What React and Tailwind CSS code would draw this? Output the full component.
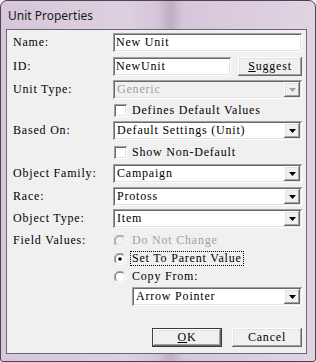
import React from "react";

const MONO = "font-[family-name:'Liberation_Serif',serif] text-[12px] tracking-[0.8px] leading-[13px]";
const SUNKEN = "shadow-[inset_1px_1px_0_#a0a0a0,inset_-1px_-1px_0_#ffffff,inset_2px_2px_0_#696969,inset_-2px_-2px_0_#e3e3e3]";
const RAISED = "shadow-[inset_-1px_-1px_0_#696969,inset_1px_1px_0_#ffffff,inset_-2px_-2px_0_#a0a0a0,inset_2px_2px_0_#e3e3e3]";

function Arrow({ disabled }) {
  return (
    <div className={`w-[16px] h-full shrink-0 bg-[#f0f0f0] flex items-center justify-center ${RAISED}`}>
      <svg width="7" height="4" viewBox="0 0 7 4">
        <path d="M0 0H7L3.5 4Z" fill={disabled ? "#a0a0a0" : "#000"} />
      </svg>
    </div>
  );
}

function Combo({ text, disabled, w = "w-[189px]" }) {
  return (
    <div className={`${w} shrink-0 h-[19px] p-[2px] flex ${SUNKEN} ${disabled ? "bg-[#f0f0f0]" : "bg-white"}`}>
      <div className={`flex-1 flex items-center pl-[2px] whitespace-nowrap ${MONO} ${disabled ? "text-[#a0a0a0]" : "text-black"}`}>{text}</div>
      <Arrow disabled={disabled} />
    </div>
  );
}

function Field({ text, w = "w-[189px]" }) {
  return (
    <div className={`${w} shrink-0 h-[19px] p-[2px] bg-white flex items-center ${SUNKEN}`}>
      <span className={`pl-[1px] whitespace-nowrap ${MONO} text-black`}>{text}</span>
    </div>
  );
}

function Label({ children }) {
  return <div className={`w-[106px] shrink-0 pl-[6px] whitespace-nowrap ${MONO} text-black`}>{children}</div>;
}

function Check({ text }) {
  return (
    <div className="flex items-center">
      <div className={`ml-[1px] w-[13px] h-[13px] shrink-0 bg-white ${SUNKEN}`} />
      <span className={`ml-[5px] whitespace-nowrap ${MONO} text-black`}>{text}</span>
    </div>
  );
}

function Radio({ text, checked, disabled, focus }) {
  return (
    <div className="flex items-center">
      <svg className="ml-[1px] shrink-0" width="12" height="12" viewBox="0 0 12 12">
        <circle cx="6" cy="6" r="5.5" fill={disabled ? "#f0f0f0" : "#fff"} />
        <path d="M1.8 10.2A5.5 5.5 0 0 1 10.2 1.8" fill="none" stroke="#a0a0a0" strokeWidth="1" />
        <path d="M2.6 9.4A4.5 4.5 0 0 1 9.4 2.6" fill="none" stroke={disabled ? "#a0a0a0" : "#696969"} strokeWidth="1" />
        <path d="M10.2 1.8A5.5 5.5 0 0 1 1.8 10.2" fill="none" stroke="#fff" strokeWidth="1" />
        <path d="M9.4 2.6A4.5 4.5 0 0 1 2.6 9.4" fill="none" stroke="#e3e3e3" strokeWidth="1" />
        {checked && <circle cx="6" cy="6" r="1.8" fill="#000" />}
      </svg>
      <span
        className={`ml-[4px] px-[1px] whitespace-nowrap ${MONO} ${disabled ? "text-[#a0a0a0]" : "text-black"} ${
          focus ? "border border-dotted border-black" : "border border-transparent"
        }`}
      >
        {text}
      </span>
    </div>
  );
}

function Button({ children, def, w = "w-[70px]" }) {
  return (
    <div
      className={`${w} shrink-0 h-[19px] bg-[#f0f0f0] flex items-center justify-center ${MONO} text-black ${
        def ? "border border-[#3c3c3c]" : ""
      } ${RAISED}`}
    >
      {children}
    </div>
  );
}

export default function App() {
  return (
    <div className="w-[316px] h-[362px] bg-[#f0f0f0]">
      <div className="w-[316px] h-[362px] border border-[#4a4650] rounded-t-[7px] rounded-b-[3px] bg-[linear-gradient(90deg,#d7c6da_0%,#ddd0e0_40%,#d4c4d8_50%,#bfaec4_54%,#d6c6d9_58%,#e0d4e3_100%)] flex flex-col overflow-hidden">
        <div className="h-[28px] flex items-center pl-[7px] pt-[1px]">
          <span className="font-[family-name:'Noto_Sans',sans-serif] text-[12px] text-[#1a1a1a]">Unit Properties</span>
        </div>
        <div className="ml-[5px] w-[301px] h-[325px] border border-[#6c6672] bg-[#f0f0f0] flex flex-col pr-[4px]">
          <div className="mt-[3px] flex items-center">
            <Label>Name:</Label>
            <Field text="New Unit" />
          </div>
          <div className="mt-[5px] flex items-center">
            <Label>ID:</Label>
            <Field text="NewUnit" w="w-[118px]" />
            <div className="ml-[7px]">
              <Button w="w-[64px]">
                <span><span className="underline">S</span>uggest</span>
              </Button>
            </div>
          </div>
          <div className="mt-[4px] flex items-center">
            <Label>Unit Type:</Label>
            <Combo text="Generic" disabled />
          </div>
          <div className="mt-[5px] flex items-center">
            <Label></Label>
            <Check text="Defines Default Values" />
          </div>
          <div className="mt-[4px] flex items-center">
            <Label>Based On:</Label>
            <Combo text="Default Settings (Unit)" />
          </div>
          <div className="mt-[6px] flex items-center">
            <Label></Label>
            <Check text="Show Non-Default" />
          </div>
          <div className="mt-[5px] flex items-center">
            <Label>Object Family:</Label>
            <Combo text="Campaign" />
          </div>
          <div className="mt-[4px] flex items-center">
            <Label>Race:</Label>
            <Combo text="Protoss" />
          </div>
          <div className="mt-[3px] flex items-center">
            <Label>Object Type:</Label>
            <Combo text="Item" />
          </div>
          <div className="mt-[6px] flex items-center h-[13px]">
            <Label>Field Values:</Label>
            <Radio text="Do Not Change" disabled />
          </div>
          <div className="mt-[5px] flex items-center h-[13px]">
            <Label></Label>
            <Radio text="Set To Parent Value" checked focus />
          </div>
          <div className="mt-[5px] flex items-center h-[13px]">
            <Label></Label>
            <Radio text="Copy From:" />
          </div>
          <div className="mt-[4px] flex items-center">
            <div className="w-[125px] shrink-0" />
            <Combo text="Arrow Pointer" w="w-[170px]" />
          </div>
          <div className="mt-[22px] flex justify-end gap-[10px]">
            <Button def>
              <span><span className="underline">O</span>K</span>
            </Button>
            <Button>Cancel</Button>
          </div>
        </div>
      </div>
    </div>
  );
}
